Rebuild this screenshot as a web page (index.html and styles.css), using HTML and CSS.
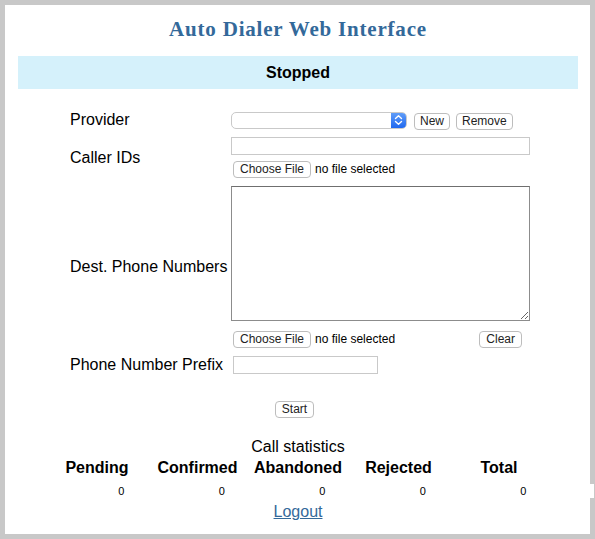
FILE: index.html
```html
<!DOCTYPE html>
<html lang="en">
<head>
<meta charset="utf-8">
<title>Auto Dialer Web Interface</title>
<link rel="stylesheet" href="styles.css">
</head>
<body>
<div class="page">
  <h1 class="title">Auto Dialer Web Interface</h1>
  <div class="status">Stopped</div>

  <form class="form">
    <label class="label">Provider</label>
    <div class="cell">
      <div class="row">
        <span class="select-wrap">
          <select class="select"><option></option></select>
          <span class="stepper">
            <svg width="9" height="12" viewBox="0 0 9 12" fill="none" stroke="#fff" stroke-width="1.4" stroke-linecap="round" stroke-linejoin="round"><path d="M1.5 4.5 L4.5 1.8 L7.5 4.5"/><path d="M1.5 7.5 L4.5 10.2 L7.5 7.5"/></svg>
          </span>
        </span>
        <button type="button" class="btn btn-new">New</button>
        <button type="button" class="btn btn-remove">Remove</button>
      </div>
    </div>

    <label class="label">Caller IDs</label>
    <div class="cell stack">
      <input type="text" class="text-input wide">
      <div class="row file-row">
        <button type="button" class="btn">Choose File</button>
        <span class="file-note">no file selected</span>
      </div>
    </div>

    <label class="label">Dest. Phone Numbers</label>
    <div class="cell stack gap9">
      <textarea class="area"></textarea>
      <div class="row file-row">
        <button type="button" class="btn">Choose File</button>
        <span class="file-note">no file selected</span>
        <button type="button" class="btn btn-clear">Clear</button>
      </div>
    </div>

    <label class="label">Phone Number Prefix</label>
    <div class="cell">
      <input type="text" class="text-input prefix">
    </div>
  </form>

  <div class="start-row">
    <button type="button" class="btn">Start</button>
  </div>

  <div class="stats">
    <div class="stats-caption">Call statistics</div>
    <div class="stats-grid stats-head">
      <div>Pending</div>
      <div>Confirmed</div>
      <div>Abandoned</div>
      <div>Rejected</div>
      <div>Total</div>
    </div>
    <div class="stats-grid stats-values">
      <div>0</div>
      <div>0</div>
      <div>0</div>
      <div>0</div>
      <div>0</div>
    </div>
  </div>

  <div class="logout-row"><a href="#" class="logout">Logout</a></div>
</div>
</body>
</html>
```

FILE: styles.css
```css
html, body {
  margin: 0;
  padding: 0;
}

body {
  background: #c8c8c8;
  padding: 5px;
  font-family: "Liberation Sans", Arial, sans-serif;
  color: #000;
}

.page {
  background: #fff;
  width: 560px;
  height: 529px;
  padding: 0 12px 0 13px;
  box-sizing: content-box;
}

.title {
  margin: 0;
  padding-top: 12px;
  font-family: "Liberation Serif", "DejaVu Serif", serif;
  font-weight: bold;
  font-size: 21px;
  letter-spacing: 0.8px;
  line-height: 24px;
  color: #33699a;
  text-align: center;
}

.status {
  margin-top: 15px;
  height: 33px;
  line-height: 33px;
  background: #d5f1fb;
  text-align: center;
  font-weight: bold;
  font-size: 16px;
}

.form {
  margin: 22px 0 0 52px;
  display: grid;
  grid-template-columns: 161px 299px;
  row-gap: 8px;
  align-items: center;
}

.label {
  font-size: 16px;
  line-height: 18px;
}

.cell {
  display: flex;
  flex-direction: column;
}

.stack {
  gap: 5px;
}

.gap9 {
  gap: 9px;
}

.row {
  display: flex;
  align-items: center;
  height: 18px;
}

.select-wrap {
  display: inline-flex;
  width: 176px;
  height: 17px;
  box-sizing: border-box;
  border: 1px solid #c9c9c9;
  border-radius: 5px;
  overflow: hidden;
  background: #fff;
}

.select {
  flex: 1;
  appearance: none;
  -webkit-appearance: none;
  border: none;
  background: transparent;
  font-size: 12px;
  padding: 0;
  margin: 0;
  outline: none;
}

.stepper {
  width: 15px;
  display: flex;
  align-items: center;
  justify-content: center;
  background: linear-gradient(#5f9df9, #2068ef);
}

.btn {
  font-family: "Liberation Sans", Arial, sans-serif;
  font-size: 12px;
  line-height: 15px;
  height: 17px;
  padding: 0 6px;
  border: 1px solid #bdbdbd;
  border-radius: 4px;
  background: #fff;
  color: #222;
  margin: 0;
  box-sizing: border-box;
}

.file-row .btn:first-child {
  margin-left: 2px;
}

.btn-new {
  margin-left: 7px;
  margin-top: 2px;
  padding: 0 5px;
}

.btn-remove {
  margin-left: 6px;
  padding: 0 5px;
  margin-top: 2px;
}

.btn-clear {
  margin-left: auto;
  margin-right: 8px;
}

.file-note {
  font-size: 12px;
  margin-left: 4px;
  color: #000;
}

.text-input {
  height: 18px;
  box-sizing: border-box;
  border: 1px solid #c9c9c9;
  padding: 0 2px;
  margin: 0;
  font-size: 12px;
  outline: none;
}

.wide {
  width: 299px;
}

.prefix {
  width: 145px;
  margin-left: 2px;
}

.area {
  width: 299px;
  height: 135px;
  box-sizing: border-box;
  border: 1px solid #8c8c8c;
  border-top-color: #6f6f6f;
  margin: 0;
  padding: 2px;
  font-size: 12px;
  outline: none;
}

.start-row {
  display: flex;
  justify-content: center;
  padding-right: 7px;
  margin-top: 27px;
}

.stats {
  margin-top: 20px;
}

.stats-caption {
  text-align: center;
  font-size: 16px;
  line-height: 18px;
}

.stats-grid {
  display: grid;
  grid-template-columns: repeat(5, 100.5px);
  justify-content: center;
}

.stats-head {
  margin-top: 3px;
  font-weight: bold;
  font-size: 16px;
  line-height: 18px;
  text-align: center;
}

.stats-values {
  margin-top: 7px;
  margin-right: -16px;
  padding-right: 16px;
  height: 14px;
  font-size: 11px;
  line-height: 14px;
  text-align: right;
  background: #fff;
}

.stats-values div {
  padding-right: 23px;
}

.logout-row {
  margin-top: 5px;
  text-align: center;
  font-size: 16px;
  line-height: 18px;
}

.logout {
  color: #33699a;
  text-decoration: underline;
}
```
